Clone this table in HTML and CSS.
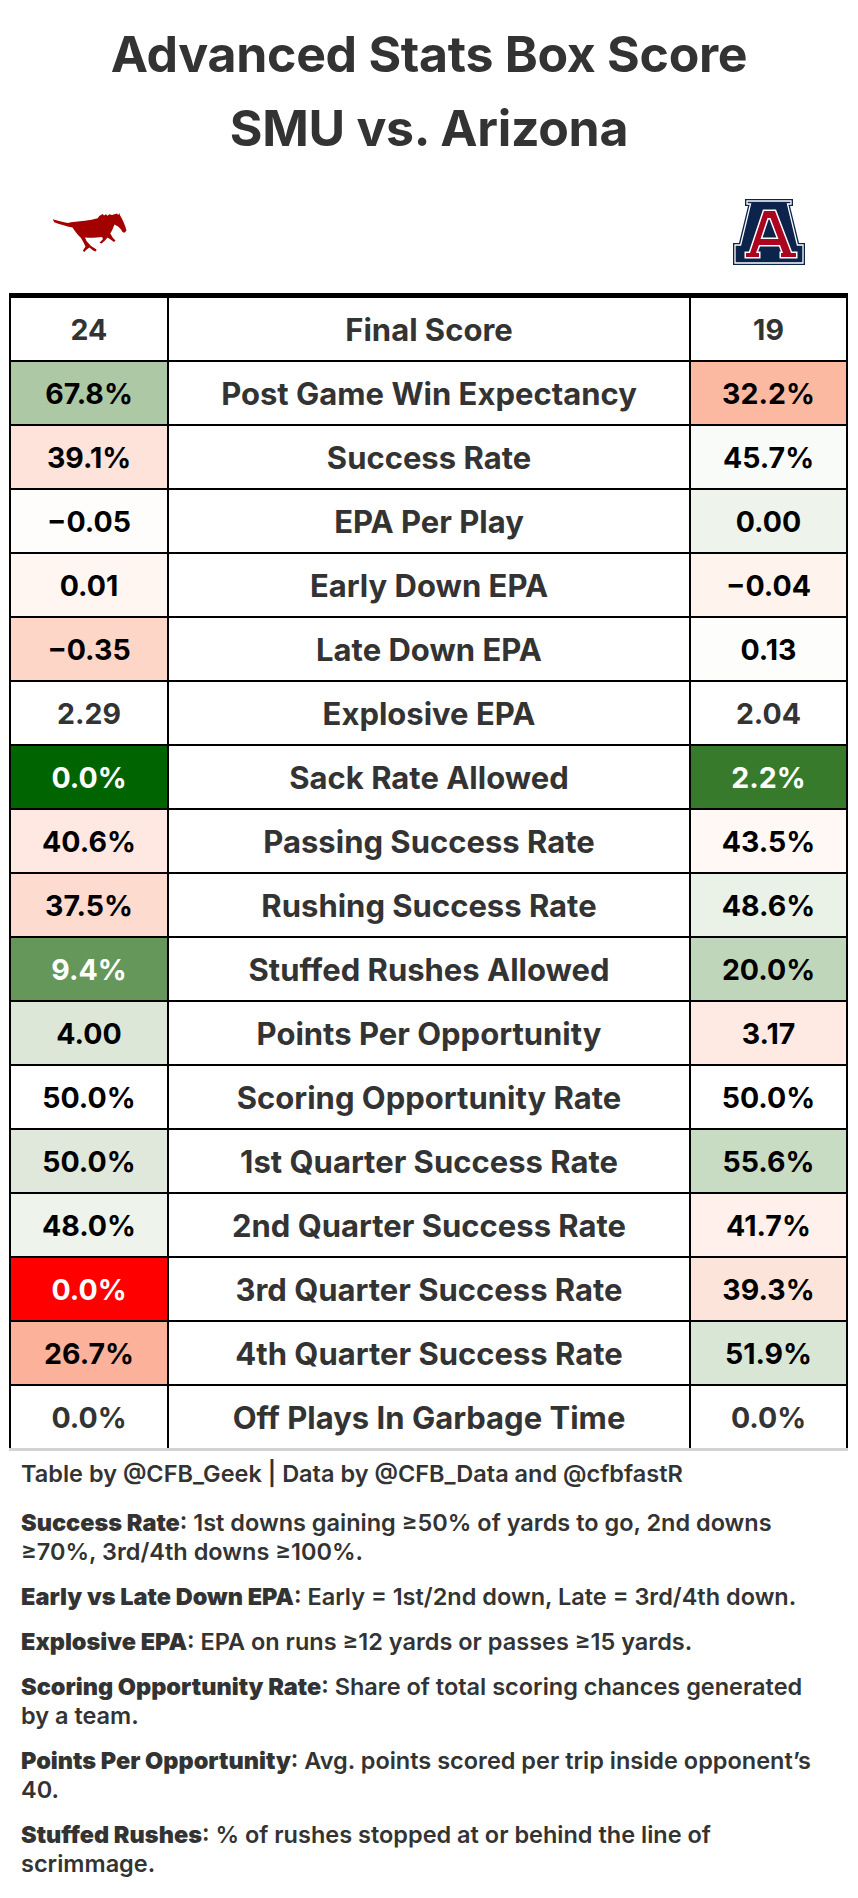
FILE: index.html
```html
<!DOCTYPE html>
<html lang="en">
<head>
<meta charset="utf-8">
<title>Advanced Stats Box Score</title>
<link rel="stylesheet" href="styles.css">
</head>
<body>
<div class="page">
  <header class="heading">
    <div class="title">Advanced Stats Box Score</div>
    <div class="title">SMU vs. Arizona</div>
  </header>

  <div class="logos">
    <div class="logo-cell">
      <svg class="smu" width="75" height="39" viewBox="0 0 75 39" aria-label="SMU">
        <path fill="#a30000" d="M0.7,6.3 C5,7.5 11,9.5 16,10 L19,9.3 C28,8.5 38,7.5 45.7,5.3 L47.3,3 L50.7,1 L52,2.5 L54,1.2 L55.5,2.8 L57.3,1.2 L60,2 L65,0.5 L66.3,2 L67.3,0 L68,2.3 C70.5,6 73,12 74.5,17.5 L72.5,19.8 L70.5,19 C69.5,17 68,15 66,13.5 L62.5,11.5 C61,15 60,18 58.3,20.5 L61,25 L63.5,27.5 L62,29 L58.5,26.5 L55.5,24.5 L53,27.5 L49.5,30.5 L47.5,29.8 L51,26 L50,24 C45,24.8 38,25 33,24.5 L34.5,28 L39,33 L44.5,36.5 L44,38.6 L41,37.5 L37.5,34.5 L34,37 L32.5,39 L30.8,37.8 L33.5,33.5 L31.5,29.5 L29,25 C25.5,22 23,18 20.5,14.5 C14,13.5 7,11 2.3,9.3 Z"/>
      </svg>
    </div>
    <div class="logo-gap"></div>
    <div class="logo-cell logo-right">
      <svg class="az" width="72" height="66" viewBox="0 0 72 66" aria-label="Arizona">
        <path fill="#0c234b" d="M12,0 H60 V7 H57 L66,44 H72 V66 H0 V44 H6 L15,7 H12 Z"/>
        <path fill="none" stroke="#ffffff" stroke-width="1.3" d="M14,2 H58 V5 H54.5 L64.4,46 H70 V64 H2 V46 H7.6 L17.5,5 H14 Z"/>
        <path fill="#ab0520" fill-rule="evenodd" stroke="#ffffff" stroke-width="3" stroke-linejoin="miter" paint-order="stroke" d="M31,12 H42 L58,54 H63 V58 H48 V54 H50 L47,46 H26 L23,54 H26 V58 H13 V54 H17 Z M34.5,19 H37.5 L45.5,40 H27.5 Z"/>
      </svg>
    </div>
  </div>

  <div class="board">
    <div class="grid">
      <div class="row"><div class="cell plain">24</div><div class="cell label">Final Score</div><div class="cell plain">19</div></div>
      <div class="row"><div class="cell on-light" style="background:#adc8a5">67.8%</div><div class="cell label">Post Game Win Expectancy</div><div class="cell on-light" style="background:#fcb9a1">32.2%</div></div>
      <div class="row"><div class="cell on-light" style="background:#fde3d9">39.1%</div><div class="cell label">Success Rate</div><div class="cell on-light" style="background:#f8fbf7">45.7%</div></div>
      <div class="row"><div class="cell on-light" style="background:#fffdfc">−0.05</div><div class="cell label">EPA Per Play</div><div class="cell on-light" style="background:#eef3ec">0.00</div></div>
      <div class="row"><div class="cell on-light" style="background:#fff6f2">0.01</div><div class="cell label">Early Down EPA</div><div class="cell on-light" style="background:#fff3ee">−0.04</div></div>
      <div class="row"><div class="cell on-light" style="background:#fdd6c8">−0.35</div><div class="cell label">Late Down EPA</div><div class="cell on-light" style="background:#fdfdfb">0.13</div></div>
      <div class="row"><div class="cell plain">2.29</div><div class="cell label">Explosive EPA</div><div class="cell plain">2.04</div></div>
      <div class="row"><div class="cell on-dark" style="background:#006400">0.0%</div><div class="cell label">Sack Rate Allowed</div><div class="cell on-dark" style="background:#377a2c">2.2%</div></div>
      <div class="row"><div class="cell on-light" style="background:#fee8e1">40.6%</div><div class="cell label">Passing Success Rate</div><div class="cell on-light" style="background:#fff8f5">43.5%</div></div>
      <div class="row"><div class="cell on-light" style="background:#fddbcf">37.5%</div><div class="cell label">Rushing Success Rate</div><div class="cell on-light" style="background:#eaf1e7">48.6%</div></div>
      <div class="row"><div class="cell on-dark" style="background:#65975b">9.4%</div><div class="cell label">Stuffed Rushes Allowed</div><div class="cell on-light" style="background:#c0d6bb">20.0%</div></div>
      <div class="row"><div class="cell on-light" style="background:#dde7d8">4.00</div><div class="cell label">Points Per Opportunity</div><div class="cell on-light" style="background:#feeae2">3.17</div></div>
      <div class="row"><div class="cell on-light" style="background:#ffffff">50.0%</div><div class="cell label">Scoring Opportunity Rate</div><div class="cell on-light" style="background:#ffffff">50.0%</div></div>
      <div class="row"><div class="cell on-light" style="background:#dfe8db">50.0%</div><div class="cell label">1st Quarter Success Rate</div><div class="cell on-light" style="background:#c8dbc3">55.6%</div></div>
      <div class="row"><div class="cell on-light" style="background:#eef3ec">48.0%</div><div class="cell label">2nd Quarter Success Rate</div><div class="cell on-light" style="background:#fff0eb">41.7%</div></div>
      <div class="row"><div class="cell on-dark" style="background:#ff0000">0.0%</div><div class="cell label">3rd Quarter Success Rate</div><div class="cell on-light" style="background:#fde4da">39.3%</div></div>
      <div class="row"><div class="cell on-light" style="background:#fcb29a">26.7%</div><div class="cell label">4th Quarter Success Rate</div><div class="cell on-light" style="background:#dae6d5">51.9%</div></div>
      <div class="row"><div class="cell plain">0.0%</div><div class="cell label">Off Plays In Garbage Time</div><div class="cell plain">0.0%</div></div>
    </div>
  </div>

  <div class="notes">
    <p class="credit">Table by @CFB_Geek | Data by @CFB_Data and @cfbfastR</p>
    <p><b>Success Rate</b>: 1st downs gaining ≥50% of yards to go, 2nd downs<br>≥70%, 3rd/4th downs ≥100%.</p>
    <p><b>Early vs Late Down EPA</b>: Early = 1st/2nd down, Late = 3rd/4th down.</p>
    <p><b>Explosive EPA</b>: EPA on runs ≥12 yards or passes ≥15 yards.</p>
    <p><b>Scoring Opportunity Rate</b>: Share of total scoring chances generated<br>by a team.</p>
    <p><b>Points Per Opportunity</b>: Avg. points scored per trip inside opponent’s<br>40.</p>
    <p><b>Stuffed Rushes</b>: % of rushes stopped at or behind the line of<br>scrimmage.</p>
  </div>
</div>
</body>
</html>
```

FILE: styles.css
```css
html, body {
  margin: 0;
  padding: 0;
  background: #ffffff;
}

.page {
  width: 858px;
  font-family: Inter, "Liberation Sans", sans-serif;
  color: #333333;
}

.heading {
  padding-top: 17px;
}

.title {
  text-align: center;
  font-size: 50px;
  font-weight: 700;
  line-height: 74px;
  letter-spacing: -0.3px;
}

.logos {
  display: flex;
  margin-left: 11px;
  width: 835px;
  height: 128px;
  padding-top: 6px;
  box-sizing: border-box;
}

.logo-cell {
  width: 156px;
  display: flex;
  align-items: center;
  justify-content: center;
}

.logo-right {
  width: 155px;
}

.logo-gap {
  width: 524px;
}

.board {
  margin-left: 9px;
  width: 839px;
  border-top: 5px solid #000000;
  border-bottom: 3px solid #d3d3d3;
}

.grid {
  border-left: 2px solid #000000;
  border-right: 2px solid #000000;
}

.row {
  display: grid;
  grid-template-columns: 156px 524px 155px;
  height: 64px;
  border-bottom: 2px solid #000000;
  box-sizing: border-box;
}

.row:last-child {
  height: 62px;
  border-bottom: none;
}

.cell {
  display: flex;
  align-items: center;
  justify-content: center;
  font-size: 28.5px;
  font-weight: 700;
  white-space: nowrap;
}

.label {
  border-left: 2px solid #000000;
  border-right: 2px solid #000000;
  color: #333333;
  font-size: 31px;
}

.plain {
  color: #333333;
}

.on-light {
  color: #000000;
}

.on-dark {
  color: #ffffff;
}

.notes {
  padding: 8px 0 0 21px;
  font-size: 23.5px;
  font-weight: 600;
  line-height: 29px;
  color: #333333;
}

.notes p {
  margin: 0 0 16px 0;
  white-space: nowrap;
}

.notes .credit {
  margin-bottom: 20px;
}

.notes b {
  font-weight: 900;
}
```
